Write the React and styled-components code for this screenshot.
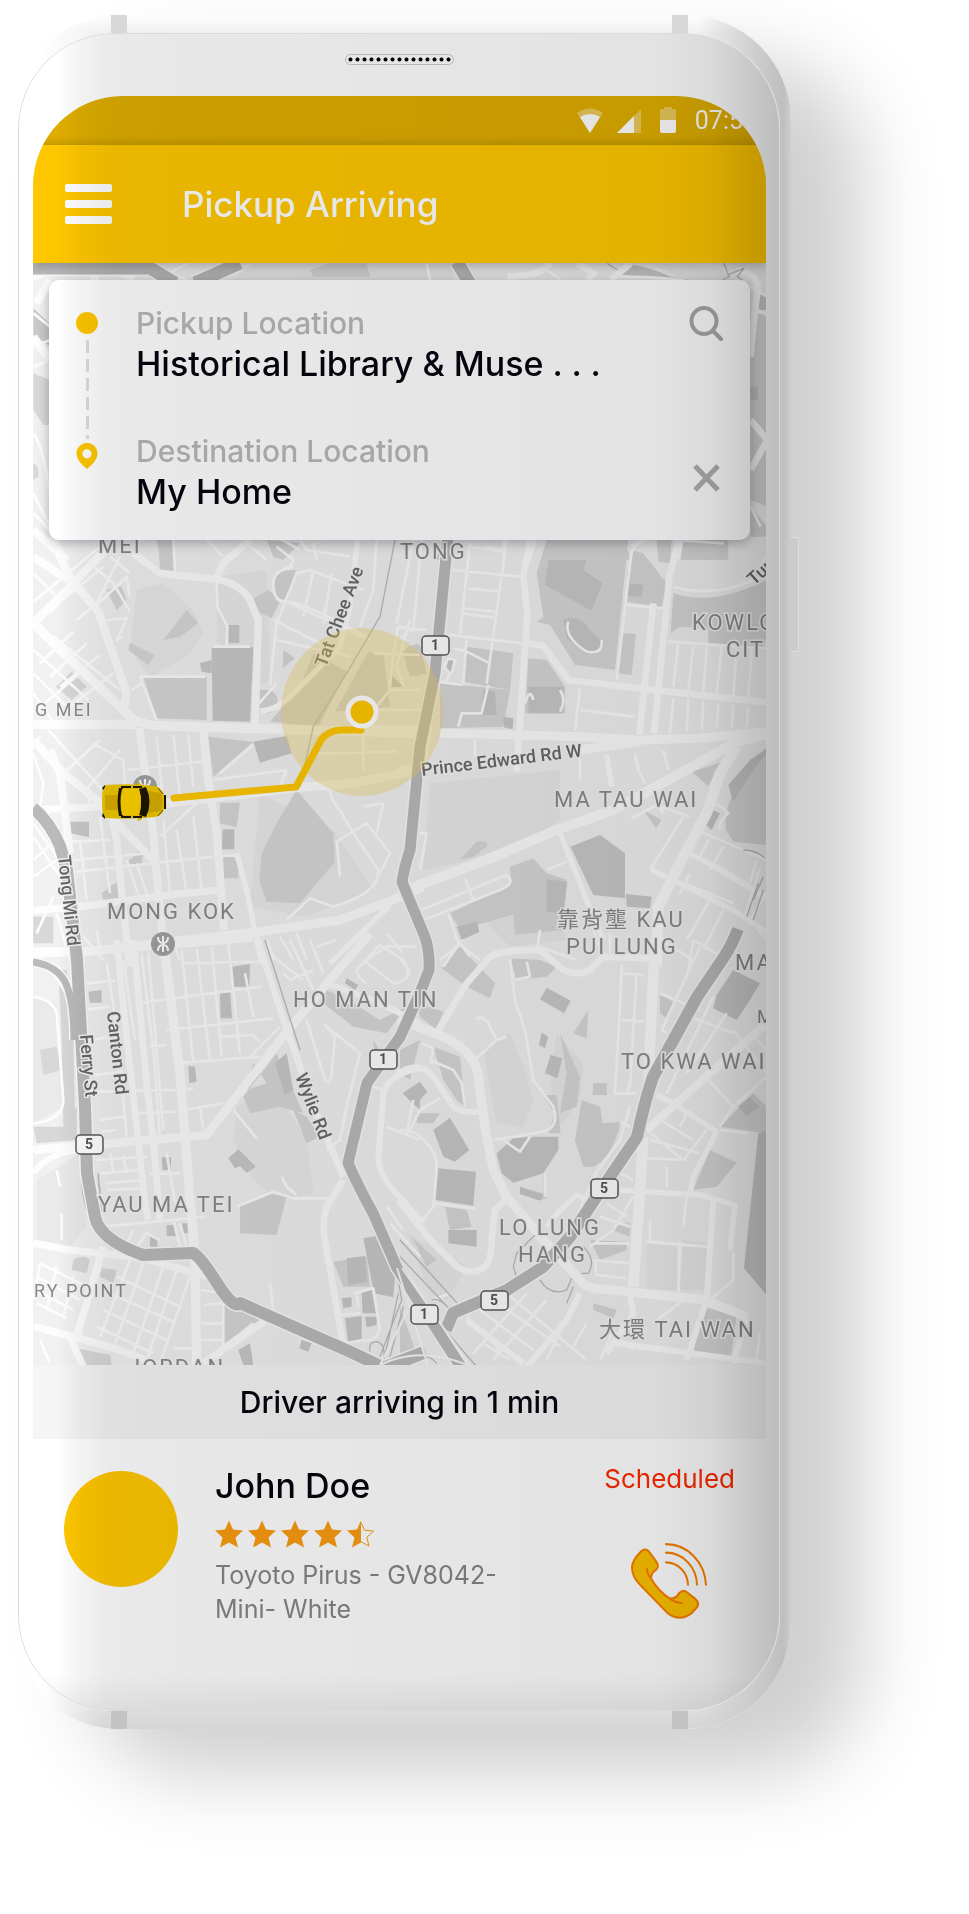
import React from "react";
import styled, { createGlobalStyle } from "styled-components";

const GlobalStyle = createGlobalStyle`
  *, *::before, *::after { box-sizing: border-box; }
  body {
    margin: 0;
    background: #fff;
    color: #05050f;
    font-family: Inter, "Liberation Sans", "Noto Sans CJK TC", sans-serif;
  }
  p, h1, h2 { margin: 0; font-weight: 500; }
  button { padding: 0; border: 0; background: none; cursor: pointer; }
  svg { display: block; }
`;

/* ---------- device ---------- */

const Page = styled.main`
  min-height: 100vh;
  padding: 15px 178px 184px 18px;
  overflow: hidden;
`;

const Phone = styled.div`
  position: relative;
  padding: 18px 11px 18px 0;
  border-radius: 100px 106px 106px 100px;
  background:
    linear-gradient(90deg, #fff 3%, transparent 11%),
    linear-gradient(90deg, transparent 88%, #c2c2c2 98%, #bfbfbf 99%, #cecece 100%),
    linear-gradient(180deg, #fefefe 0, #f0f0f0 18px, #e2e2e2 98%, #d6d6d6 100%);
  box-shadow: 72px 46px 80px rgba(0, 0, 0, 0.19);
`;

const Antenna = styled.span`
  position: absolute;
  ${(p) => p.$edge}: 0;
  ${(p) => p.$side}: ${(p) => (p.$side === "left" ? 93 : 103)}px;
  width: 16px;
  height: 18px;
  background: ${(p) => (p.$edge === "top" ? "#d8d8d8" : "#c3c3c3")};
`;

const PowerKey = styled.span`
  position: absolute;
  top: 522px;
  left: 100%;
  width: 8px;
  height: 115px;
  border-radius: 0 3px 3px 0;
  border: 1px solid #dedede;
  border-left: 0;
  background: #cbcbcb;
`;

const Front = styled.div`
  position: relative;
  border-radius: 96px;
  overflow: hidden;
  padding: 0 14px 0 15px;
  background: #fff;
`;

const Shade = styled.div`
  position: absolute;
  z-index: 2;
  inset: 0;
  border-radius: 96px;
  border: 1px solid #dadada;
  pointer-events: none;
  mix-blend-mode: multiply;
  background:
    linear-gradient(0deg, rgba(0, 0, 0, 0.06) 0, transparent 36px),
    linear-gradient(
      90deg,
      #fff 0, #fff 5%, #f3f3f3 8%, #eaeaea 12%, #e8e8e8 20%,
      #e5e5e5 60%, #e3e3e3 84%, #dadada 91%, #c9c9c9 96%, #bdbdbd 100%
    );
`;

const Earpiece = styled.div`
  display: grid;
  place-items: center;
  height: 63px;
  padding-bottom: 10px;
`;

const Grille = styled.div`
  width: 109px;
  height: 11px;
  border: 1px solid #ccc;
  border-radius: 6px;
  background: radial-gradient(circle, #000 0 1px, #000 1.6px, transparent 2.4px) 1px center / 7px 9px repeat-x content-box;
`;

const Screen = styled.div`
  overflow: hidden;
  border-radius: 90px 90px 0 0;
`;

const StatusBar = styled.div`
  display: flex;
  justify-content: flex-end;
  align-items: center;
  gap: 14px;
  height: 49px;
  padding-right: 23px;
  background: #dfae00;
  color: #fff;
  font: 400 25px/49px Roboto, sans-serif;
`;

const AppBar = styled.header`
  position: relative;
  z-index: 1;
  display: flex;
  align-items: center;
  gap: 70px;
  height: 118px;
  padding-left: 32px;
  background: #ffc700;
  box-shadow: 0 2px 12px rgba(0, 0, 30, 0.3);
`;

const MenuButton = styled.button`
  display: grid;
  gap: 8px;
  width: 47px;
`;

const MenuBar = styled.span`
  height: 8px;
  border-radius: 2px;
  background: #fff;
`;

const Title = styled.h1`
  color: #fff;
  font-size: 35px;
  line-height: 44px;
`;

/* ---------- map and trip card ---------- */

const MapArea = styled.section`
  display: grid;
  overflow: hidden;
  > * { grid-area: 1 / 1; }
`;

const MapDrawing = styled.svg`
  width: 100%;
  height: auto;
  background: #f1f1f1;
`;

const TripCard = styled.div`
  position: relative;
  align-self: start;
  display: flex;
  margin: 17px 16px 0;
  padding: 25px 27px;
  border-radius: 10px;
  background: #fff;
  box-shadow: 0 3px 12px rgba(0, 0, 30, 0.3);
`;

const Rail = styled.div`
  display: flex;
  flex-direction: column;
  align-items: center;
  width: 22px;
  padding: 7px 0 46px;
`;

const Dot = styled.span`
  width: 22px;
  height: 22px;
  border-radius: 50%;
  background: #ffc700;
`;

const Dashes = styled.span`
  flex: 1;
  width: 3px;
  margin: 6px 0 4px;
  background: repeating-linear-gradient(#ddd 0 13px, transparent 13px 19px);
`;

const Stops = styled.div`
  flex: 1;
  min-width: 0;
  display: grid;
  gap: 46px;
  padding-left: 38px;
`;

const StopLabel = styled.p`
  color: #b8b8b8;
  font-size: 30px;
  line-height: 36px;
`;

const StopValue = styled.p`
  font-size: 34px;
  line-height: 46px;
  white-space: nowrap;
`;

const CardActions = styled.div`
  display: flex;
  flex-direction: column;
  justify-content: space-between;
  padding-bottom: 20px;
`;

/* ---------- driver ---------- */

const Banner = styled.p`
  height: 74px;
  background: #f5f5f5;
  font-size: 30px;
  line-height: 74px;
  text-align: center;
`;

const Driver = styled.section`
  display: flex;
  padding: 27px 31px 85px 31px;
`;

const Avatar = styled.div`
  width: 114px;
  height: 116px;
  margin: 5px 37px 0 0;
  border-radius: 50%;
  background: #ffc700;
`;

const DriverInfo = styled.div`
  flex: 1;
  min-width: 0;
`;

const DriverName = styled.h2`
  font-size: 34px;
  line-height: 40px;
`;

const Stars = styled.div`
  display: flex;
  gap: 5px;
  margin: 14px 0 10px;
`;

const CarInfo = styled.p`
  max-width: 300px;
  color: #858585;
  font-size: 25px;
  font-weight: 400;
  line-height: 34px;
`;

const DriverSide = styled.div`
  display: flex;
  flex-direction: column;
  align-items: flex-end;
`;

const Scheduled = styled.p`
  color: #ff2a00;
  font-size: 26px;
  font-weight: 400;
  line-height: 26px;
`;

const CallLink = styled.a`
  margin: 50px 27px 0 0;
`;

/* ---------- map data: tiles drawn at three units per pixel ---------- */

const tiles = [
  {
    at: "translate(20 540) scale(.3333)",
    light: [
      "M350 150 430 130 520 210 550 280 500 350 390 410 330 330Z",
      "M590 110 740 90 750 420 710 440 590 300Z",
      "M720 760 940 870 1060 1050 860 1130 690 1100Z",
    ],
    blocks: [
      "M370 410H560V540L410 535Z", "M260 150 305 140 320 180 290 210Z",
      "M155 395 200 440 155 480 108 440Z", "M330 308 405 345 385 375 325 330Z",
      "M415 0H460L465 95 420 88Z", "M880 340 982 395 895 560 750 545 840 440Z",
      "M1045 335 1090 340 1110 500 945 515Z", "M700 175 745 150 782 180 755 235 705 210Z",
      "M720 450Q780 445 772 495L750 520H718Z", "M565 590 700 605 580 710Z",
      "M600 788H660L650 862 600 850Z", "M830 750 940 880 945 965 840 1090 740 1085 718 1020 725 940 770 850Z",
      "M500 210 535 250 480 290 430 300Z", "M765 105Q790 88 828 90L802 186Q765 175 762 145Z",
      "M790 330 825 355 788 385Z", "M245 1060 285 1030 298 1022 300 1080 255 1100Z",
      "M40 1130H100V1210H40Z", "M610 950H655V1015H612Z", "M1190 310Q1155 330 1158 370T1200 405Z",
      "M320 970 370 920 365 975Z",
    ],
    dark: [
      "M575 325 700 322 690 545 578 542Z", "M540 370 575 360V400L545 395Z", "M625 255H658V308H625Z",
      "M700 605 800 588 815 640 720 668Z", "M608 868H643V928H606Z", "M150 845H207V892L152 880Z",
      "M1115 405 1150 440 1113 442Z",
    ],
    minor: [
      "M40 100 110 170M40 185 240 20M70 225 250 80M210 70 280 130 330 215M300 50 230 190 170 240",
      "M330 170 320 110 230 195M260 240 320 235 290 300 310 290M170 120 90 220M330 100 270 50",
      "M60 370 160 275M90 410 200 310M120 440 240 345M40 400 140 500M40 330 205 480M150 500 280 400",
      "M40 460 100 545M100 290 300 450M40 520 180 400M590 110 592 200 622 260 620 320M580 320H690",
      "M360 410 410 540M360 410H555M335 450 365 430M700 510 770 430",
      "M85 570 320 830M130 700 240 600M190 760 300 630M220 610 310 660 320 820M60 590 20 650",
      "M320 690 545 665M410 590 430 790M460 585 480 770M505 585 520 740M420 890 530 790",
      "M155 905 270 900M180 900 200 1080M170 995 580 950M240 830 270 1060M430 840 450 1060M470 870 500 1060M520 830 545 1050",
      "M200 740 210 800M320 960 360 1080M350 970 380 1060M160 960 380 940",
      "M750 435 770 250 830 100 870 90 1030 150M880 95 850 230M935 100 910 250M760 240 960 340M770 300 990 350",
      "M790 180 1050 300M1070 0 1060 150 1020 260M820 80Q755 90 760 140T800 185 1040 290",
      "M580 720 800 690M600 700 700 615M800 690 780 740M640 770 830 745",
      "M560 0 610 50M460 0 465 95M770 20 820 60 805 90M840 0 860 30 990 50",
      "M930 740Q930 780 960 810L1000 880 1075 990Q1080 1060 940 1100L870 1075 800 1140",
      "M950 905 1040 850 1110 940 1080 1000M1070 880 1090 790 1030 800M950 900 960 1010",
      "M1060 340 1200 345M1110 440 1120 340 1135 260 1200 270M1070 500 1110 450 1200 450M1040 510H1200M890 640 1130 635M1030 590V690M1010 560H1200",
      "M1180 0 1130 250M1170 240 1130 380 1150 440M600 950Q650 940 655 960",
      "M50 1180 100 1070M740 1200 760 1260M780 1190 820 1260M830 1180 860 1260M190 1190 250 1260M450 1180 480 1260M230 1170 240 1230M1100 1180 1150 1240M1040 1260 1100 1220H1190",
      "M40 850 140 990M40 890 120 1010M40 1010 110 960M40 960 120 890",
      "M40 640 70 730 60 800M110 1120 150 1260",
    ],
    roads: [
      ["M40 553H350M40 250 340 540Q380 558 440 558L870 570 1210 580", 28],
      ["M95 -10 150 115 235 215 320 460 312 505M40 250 165 125 275 10M40 50 160 130", 25],
      ["M340 40 420 100 590 118Q660 130 690 180L715 240 705 560M590 115 610 70 690 0", 22],
      ["M40 600 120 690 230 780 310 870 400 960M90 630 120 700 150 940", 24],
      ["M358 565 375 690 400 880 420 1120 440 1280M550 570 562 700 590 880 612 1170", 24],
      ["M275 830 290 900 310 1110 330 1280M40 810 245 800M40 1112 200 1098 420 1068 600 1050", 22],
      ["M40 1235H200L720 1175 960 1140 1120 1080 1210 1040M440 790 845 742 1000 730 1200 688", 27],
      ["M720 513Q780 510 840 440L960 320 990 200 1015 -10M650 940 680 1050 710 1200 725 1270M1110 1095 930 1270", 16],
    ],
    rail: "M1125 0 1080 230 980 400 880 560 840 740",
  },
  {
    at: "translate(400 540) scale(.3333)",
    light: ["M90 730 480 690 480 840 390 900 210 960 70 990Z", "M210 1100 420 1000 500 1200 330 1220Z"],
    blocks: [
      "M440 0 685 0 645 390 525 375 450 255 410 245 430 230 410 100Z",
      "M690 30 730 40 800 130 785 200 680 185Z", "M820 160Q940 200 1100 120V290L1090 325 925 315 925 265 840 260 812 280Z",
      "M845 0H985V60L850 50Z", "M200 320 340 340 330 450 190 425Z", "M120 430 330 450 310 560 120 565Z",
      "M385 355 440 360 495 440V520H375Z", "M668 280 708 282 695 405 655 400Z", "M330 980 400 955 440 1000 500 1020 490 1170 345 1185Z",
      "M150 1120 340 1030 350 1120 180 1170Z", "M875 695 960 668 925 738Z", "M730 810 785 840 768 865Z",
      "M978 870Q970 810 1010 740L1100 620V915L1000 905Z", "M178 960 230 905Q270 900 260 920L220 950Z",
      "M10 340Q20 310 60 315L80 400 30 410Z", "M770 0 815 0 810 70 775 65Z",
      "M680 95 715 95 715 130 685 130Z",
    ],
    dark: [
      "M455 0H540L570 25 550 90 607 130 575 212 435 135Z", "M685 130 730 135 725 170 683 168Z",
      "M385 440H490V520H385Z", "M250 450 285 455 290 525 245 525Z", "M512 920 600 885 675 940V1075L580 1065Z",
      "M440 1018 502 1025 490 1120 440 1115Z", "M170 1160 230 1145 238 1175 185 1200Z",
      "M678 1062 755 1070 750 1105 680 1100Z", "M145 360H160V395H138Z", "M490 240Q540 220 570 270L612 310Q605 345 560 342L500 295Z",
      "M985 735 1050 660 1100 625V640L1060 690 1000 785Z", "M940 810 960 820 935 870 918 855Z", "M310 530 340 535 338 568 312 562Z",
    ],
    minor: [
      "M65 0 40 270M210 10 180 280M320 0 260 430M160 90 360 110M210 20 310 35M205 145 300 155M190 205 285 215M185 220 280 232",
      "M0 300Q20 260 80 270M110 280 370 310M200 290 190 430M160 325 200 335 270 370M110 425 190 435M265 435 245 520 185 520 175 560",
      "M135 430 150 400 130 380 145 355 165 360 155 400M695 30 650 420M695 20Q710 0 740 0M680 195 790 205M540 445 525 570M540 510 705 530",
      "M540 655V720M225 600V650M705 640 715 690 735 730M790 630 805 690M695 835 770 795 870 830M770 790 790 820M110 430 70 720",
      "M835 310 820 440M880 320 865 450M920 320 910 455M965 320 950 460M1010 325 1000 470M1055 330 1045 475M805 305 1100 325",
      "M820 475 810 580M865 475 860 575M910 485 905 570M955 490 950 565M1000 495 995 565M1045 500 1040 560",
      "M820 140Q960 180 1100 100M70 1140 300 1050Q350 1030 320 1005L40 1120M195 1015 220 1080M145 1120 175 1210 240 1260M175 1215 120 1260",
      "M440 990 500 965M850 830 750 990M870 940 1100 1080M890 870 1100 960M925 900 900 950M970 920 930 990M1070 960 1050 1030M870 1000 840 1060",
      "M830 1020 1000 1090M1080 985 1030 1140M930 1080 860 1200M970 1110 910 1230M880 1200 980 1260M1100 1060 1050 1140 1100 1200",
      "M960 870Q950 850 985 820 960 790 930 790M1045 940Q1080 940 1100 960M250 1260Q290 1220 430 1225L530 1260M575 1150 600 1230M630 1180V1240M420 1170 410 1240",
      "M60 880H80L60 990M1100 50Q1090 60 1080 80M375 490Q390 440 400 480M480 450Q500 480 480 515M505 245Q490 290 560 335 610 345 605 300",
    ],
    roads: [
      ["M390 0 370 110 382 220 350 695M385 310 430 318 505 420 720 445 1105 488", 20],
      ["M840 -10 808 110 800 200 762 580M760 190 718 585", 20],
      ["M120 580 350 585 540 590 720 600 900 595 1105 575M540 630 720 605", 27],
      ["M20 1050 270 955 470 870 640 810 860 690 1000 610 1105 580", 30],
      ["M1010 620 960 700 920 820 840 970 775 1100 770 1280", 32],
      ["M620 645 635 740M480 880 560 1080 610 1200M755 990 1000 1110 1105 1180M860 935 1000 1010 1105 1075", 16],
      ["M-5 690 70 680", 22],
    ],
    rail: "M1030 930Q1070 930 1095 955M1075 1030 1040 1130M1090 1050 1060 1140M1060 1080 1090 1010",
  },
  {
    at: "translate(20 940) scale(.3333)",
    light: ["M650 500 760 440 860 600 880 760 770 780 700 720 640 600Z", "M40 170 110 190 130 500 40 550Z", "M50 720 180 640 200 860 150 920 50 900Z"],
    blocks: [
      "M770 340 850 520 780 500 690 520 670 470Z", "M920 150 1000 190 1080 240 1160 200 1100 280 1000 260 910 190Z",
      "M40 560H130L170 500V600L50 610Z", "M115 90H140L160 280 165 560H130L125 300Z", "M60 330 110 320 125 390 70 405Z",
      "M660 800 740 760 800 770 770 885 660 880Z", "M940 965 1040 950 1050 1040 970 1040Z", "M612 1080 720 1140 612 1210Z",
      "M160 960Q190 940 210 960L200 1000 155 990Z", "M245 985 290 990 280 1030 240 1010Z", "M170 1225 270 1245 275 1275H190Z",
      "M820 510 860 530 900 590 860 610Z", "M700 370 680 450 740 430Z", "M1060 300 1090 350 1070 420Z",
    ],
    dark: [
      "M637 80 690 72 688 140 642 140Z", "M600 160 630 157 636 235 602 235Z", "M205 155 245 150V188H210Z",
      "M425 652H453V690H428Z", "M655 628 708 680 680 698 660 678 645 685 625 655Z", "M505 378 525 380 530 425 508 430Z",
      "M980 955 1035 948 1042 1025 985 1035Z", "M1030 895 1070 888 1125 1010 1120 1072 1062 1060Z",
      "M965 1075 995 1072V1100L970 1105Z", "M1025 1060 1055 1048 1068 1120H1028Z", "M975 1135 1025 1128V1200L985 1210Z",
      "M1035 1130 1070 1130V1155L1040 1162Z", "M655 1230 690 1210 700 1275H670Z", "M845 1200 875 1210 865 1235 838 1225Z",
      "M440 855H468V888H440Z", "M487 850H503V880H487Z", "M390 890H412V920H390Z", "M1150 460 1200 425V510Z",
      "M765 370 800 340 820 450 795 465Z", "M980 115 1015 135 1005 150 975 130Z", "M230 700 245 760 235 740Z",
    ],
    minor: [
      "M40 170Q100 180 110 220L130 480Q130 540 40 550M200 130 285 122M205 208 270 200M260 70 290 260 320 590",
      "M310 60 345 300M365 45 400 330 420 590M385 40 430 570M485 30 520 370M530 25 570 360M575 20 605 350M625 10 660 340M675 100 700 230M345 190 725 140M490 70 715 65",
      "M440 270 760 235M470 370 720 350M220 300 270 290M220 405 310 395M230 455 470 450M340 520 470 515M240 540 310 530M245 575 290 570",
      "M230 660 380 650M240 700 360 690M255 730 370 720M260 750 360 745M390 700 480 700M270 640 280 700M310 645 320 700M440 640 465 790",
      "M490 510 610 490M540 500 550 570M500 450 520 445M600 290 700 285 720 305M690 350 780 260M640 510 710 595M390 320 440 315",
      "M250 860 560 830M340 870 310 930M350 920 380 880 420 900M460 840 480 920M480 850 500 920",
      "M60 970 200 1040M50 1010 180 1080M45 1050 160 1110M50 1090 140 1135M60 970 40 1080M110 980 80 1110M160 1010 130 1130",
      "M330 960 240 1190M370 970 285 1210M430 980 340 1240M470 990 380 1260M510 1010 420 1270M290 1010 480 1100M270 1060 470 1150M250 1110 440 1200M230 1160 400 1240",
      "M545 1050 605 1060M550 1095 605 1090M545 1150 610 1150M540 1200H610M610 1080V1220M550 1270 700 1150M460 1225H540",
      "M790 100 810 120 880 90M740 0 760 50 850 120M810 0 880 150M870 0 910 100M860 240 915 420Q930 440 935 400L945 290 915 255 1020 340 980 500 960 600 920 630",
      "M1030 60 1120 130Q1150 130 1170 100L1150 60 1080 15 1010 90Q1010 110 1040 130M785 710 800 740 830 765",
      "M650 800 760 755 820 775 920 775M750 1030 760 1110M1000 1060 1060 1045 1080 1170Q1060 1210 1030 1200L975 1210M1010 1060 1015 1100M960 1125 1020 1120",
      "M1100 560 1200 600M1180 480 1160 580M890 20 950 0M1060 440 1090 450M110 690 120 740M125 820V900M60 1200 90 1270M50 60Q110 90 150 190",
      "M1100 800 1150 870M1110 850 1200 950",
    ],
    roads: [
      ["M40 45 290 30 700 -5M290 0 310 200 350 560 375 790 385 840M340 0 380 430 400 600 420 840", 20],
      ["M435 40 480 400 510 780 525 940 530 1280", 28],
      ["M1050 -20 930 120 800 275 560 585 250 612 40 630", 26],
      ["M710 -10 800 270 830 350 880 500 970 710M970 720 920 800Q905 850 915 900L970 1220", 20],
      ["M920 130 1060 180 1200 250M40 700Q80 640 180 630", 18],
      ["M40 910 150 930 340 950 420 970 600 1020M250 920 170 1190M40 1160 160 1190 300 1230 400 1270M150 1190 190 1280M550 1270 740 1140", 22],
      ["M1200 385Q1110 400 1090 460L1075 660Q1080 700 1110 740L1210 850", 18],
    ],
    rail: "M735 0 840 330M1135 1060 1090 1270M1150 1100 1105 1270M1090 1270Q1100 1210 1070 1205 1045 1205 1050 1235M185 720Q190 850 275 925M235 700 245 830M1130 990 1145 1080 1080 1250",
  },
  {
    at: "translate(400 940) scale(.3333)",
    light: [
      "M250 330 330 280 370 380 400 480 370 560 290 550Z", "M470 280 550 370 540 480 480 560 450 440Z",
      "M740 910 830 920 830 1050 740 1050Z", "M850 900 920 910 920 1050 840 1050Z", "M20 880 200 980 140 1080 90 1060Z",
    ],
    blocks: [
      "M125 85 180 20 285 130 270 175 200 140Z", "M330 55 420 60 470 80 440 110 350 120Z", "M780 165 820 185 800 235 780 220Z",
      "M100 320 180 350 195 500 170 480 130 420Z", "M428 465H470L482 580H445L465 520Z", "M545 480 600 500 608 550 662 545Q640 650 580 680L550 680 525 600Z",
      "M580 430H620V465H578Z", "M480 280 540 410 530 500 480 520 500 400Z", "M960 560 1060 460 1100 500V580Z",
      "M930 630 1010 668 950 740 880 750Z", "M35 890 110 960 80 980Z", "M360 740 430 760 430 700 440 775 420 780 360 760Z",
      "M135 800 200 810 215 860 150 870Z", "M570 900 680 905V930L600 960Z", "M635 870 650 850H690V890Z",
      "M910 1100 1010 1130 990 1265 880 1240Z", "M50 190 130 215 110 270 60 230Z", "M520 280 565 210 560 295Z",
      "M0 1100 60 1270H0Z", "M580 1090 650 1110 640 1135 580 1110Z", "M30 420 60 300 0 330V400Z",
      "M50 520 120 520 100 550 50 550Z",
    ],
    dark: [
      "M440 143 512 182 492 220 420 178Z", "M425 278 445 290 435 325 417 315Z", "M452 345 487 355 472 415 435 400Z",
      "M100 570 150 533 208 630 165 665 130 650Z", "M115 685 228 695 220 797 107 780Z", "M8 460 60 425 82 455 45 497Z",
      "M290 640 340 595 400 590 475 590 475 630 430 700 340 728 305 700Z", "M145 870 230 870V920L145 910Z",
      "M1000 90 1080 130 1050 180 1010 240 940 205 950 165Z", "M1075 580 1100 570V1065L1032 985Z",
      "M1015 500 1050 470 1078 500 1040 530Z", "M360 740 430 765 420 782 360 762Z",
    ],
    minor: [
      "M330 55 345 180 375 270 400 420Q430 460 460 500 480 560 430 575L280 600M345 120 390 110 380 65",
      "M230 355 290 300 265 250Q240 220 230 240M290 300 320 290M65 310 100 325 90 370M90 360 160 390 185 430 195 500M30 570 60 510 120 475",
      "M0 570Q50 570 80 610 110 640 110 680L100 800 60 850M105 790 225 805M310 600 360 635 390 590M435 700V770",
      "M665 75 660 200 645 460H710M710 100 690 440M665 100 730 105M665 240 730 245M780 0 880 60M900 20 785 270 800 280M880 0 860 120",
      "M780 160 900 210M870 230 1000 280M940 170 800 460M980 220 860 400M1000 270 1100 400M925 420 1000 500 960 560M1000 500 1100 410",
      "M1050 280 1100 330M740 570 850 660 920 570M750 600 900 640M780 540 880 600M840 560 860 520M740 655 860 660M800 680V740M860 770 850 860",
      "M660 700 700 720M690 500 660 600 580 710M660 545 690 560M530 760 480 820M620 790 680 830M600 830 690 860M640 870 700 770",
      "M580 910 690 910M580 960 690 970M590 1005 680 1015M585 960 590 1010M740 905 920 920M750 840V900M840 910 835 1060M1000 940 1000 1020 930 1080",
      "M200 1130 300 1230M240 1110 400 1230M280 1080 480 1220M320 1060 560 1260M380 1060 220 1240M440 1080 280 1260M500 1130 440 1260M560 1150 520 1220M250 1210 330 1260M640 1170 600 1260M700 1230 640 1180",
      "M150 1060 100 1080M960 570 1045 580M680 460 690 430M570 920 640 870M850 1080 760 1150M0 60Q30 80 20 110M1080 1180 1070 1260",
      "M175 0 210 50M130 80 170 20 190 0M590 700 560 760 500 900",
    ],
    roads: [
      ["M115 270 200 130 270 50Q300 30 420 30L490 90Q530 110 570 90L610 50 750 55", 20],
      ["M765 0 745 420M730 590 720 750 700 1040", 32],
      ["M-5 235 130 290Q240 340 238 440L255 560 280 690 320 770 430 900 540 1020Q560 1050 620 1048L910 1080 1040 1130", 28],
      ["M1100 250 930 400 740 570", 24],
      ["M-5 400Q60 360 100 410L160 500Q180 520 240 515", 18],
      ["M-5 780 100 910 170 980Q220 1010 255 980 275 960 275 900L285 810 320 775", 20],
      ["M820 490 950 575 880 710 870 760M740 755 900 765 1005 795 990 930M770 465 820 490M660 750 740 755", 16],
      ["M940 780 920 1080 860 1260M620 1240 700 1120 690 1070M650 1210 1100 1270M380 1280 500 1140 540 1060M1040 1130 1000 1270M200 1140 370 1270", 18],
      ["M530 765 480 810 440 860M530 765 560 780", 16],
    ],
    rail: "M405 885 350 940 340 980 355 1030M420 1020Q450 1070 500 1050L515 1015M520 1040 500 1090M550 920Q590 960 565 1000H545M95 1080Q120 1070 160 1120M0 980 100 1130 230 1280M0 950 170 1130M20 1060 120 1170 200 1280M0 900 190 1110M0 1260Q80 1230 110 1270",
  },
  {
    at: "translate(0 260) scale(.3333)",
    light: ["M760 10H1360V60H700Z"],
    blocks: ["M100 340 150 360V495H130L100 450Z", "M100 610Q120 620 115 650L100 660Z", "M470 840 520 850 510 900 480 890Z", "M800 840 900 850 850 900 820 890Z", "M930 30 990 10H1100L1110 50H940Z"],
    dark: ["M100 145 148 190V258L100 225Z", "M1325 840H1365L1350 900H1310Z"],
    minor: ["M100 160 150 200M100 320 150 300M100 700 200 900M440 10 560 60M490 50 560 10M740 850 800 900M830 830 900 870M1280 10 1290 60M950 900 940 850M1070 840 1060 900M100 520Q130 560 150 700M100 760 160 820M100 260 150 240"],
    roads: [["M100 50Q180 15 270 20T400 60M285 10V60M100 230 150 300M100 810 200 900M110 130 150 60", 24]],
    rail: "M100 20 260 10",
  },
  {
    at: "translate(484 260) scale(.3333)",
    light: ["M500 10 700 20 750 60H600Z"],
    blocks: ["M820 160 850 165V740L800 720 800 260Z", "M800 740 850 800V830H800Z", "M190 840 420 840 440 900H170Z", "M600 840 730 850 720 900H590Z"],
    dark: ["M420 15Q470 10 560 50L620 60 410 45Z", "M820 100 850 110V150L825 150Z", "M800 380H822V420H800Z"],
    minor: ["M190 30 230 60M410 50Q500 50 600 60M800 80 850 110M820 150 850 165M800 740 830 800M440 900Q440 850 490 840M60 840 60 900M0 860 60 870M570 840 720 850"],
    roads: [["M70 50 130 45Q170 40 200 10M280 10 330 40 310 60M440 10 380 60M760 30Q830 40 820 100T800 290M800 480 850 540 800 630M150 840 130 900M590 840 575 900", 20]],
    rail: "M720 10 735 50 715 60M730 45 780 25 760 50 775 60M370 10 400 30",
  },
];

const highways = [
  ["M448 536 435 673 420 747 410 850Q404 868 402 882L425 937Q430 952 429 970L420 993 400 1037 367 1083 348 1163Q360 1190 373 1213L397 1268 463 1370", 11],
  ["M33 808Q50 822 60 846L67 870 77 960 85 1107 87 1173 95 1217Q100 1240 143 1255L193 1253Q200 1256 217 1283T240 1303L353 1353 384 1368", 12],
  ["M33 962Q58 966 66 984T74 1040", 7],
  ["M738 929Q732 945 724 957L697 997 653 1077Q645 1100 637 1137L603 1187 570 1237 543 1267 507 1290 453 1313 446 1330", 12],
  ["M457 262 470 284M195 283 240 263M33 268H150L175 283M384 1368 425 1352", 13],
];

const places = [
  [98, 553, "MEI"], [400, 559, "TONG"], [692, 630, "KOWLO"], [726, 657, "CIT"],
  [35, 716, "G MEI", 18], [554, 807, "MA TAU WAI"], [107, 919, "MONG KOK"],
  [557, 927, "靠背壟 KAU"], [566, 954, "PUI LUNG"], [735, 970, "MA"], [757, 1023, "M", 18],
  [293, 1007, "HO MAN TIN"], [621, 1069, "TO KWA WAI"], [98, 1212, "YAU MA TEI"],
  [34, 1297, "RY POINT", 18], [499, 1235, "LO LUNG"], [518, 1262, "HANG"],
  [599, 1337, "大環 TAI WAN"], [128, 1375, "JORDAN"],
];

const streets = [
  [326, 668, -69, "Tat Chee Ave"], [422, 776, -7, "Prince Edward Rd W"], [58, 856, 84, "Tong Mi Rd"],
  [80, 1035, 85, "Ferry St"], [107, 1012, 84, "Canton Rd"], [295, 1076, 69, "Wylie Rd"], [754, 586, -42, "Tur"],
];

const shields = [[435, 645, 1], [383, 1059, 1], [89, 1144, 5], [604, 1188, 5], [494, 1300, 5], [424, 1314, 1]];

const PlaceName = styled.text`
  font: 400 ${(p) => p.$size}px Roboto, "Noto Sans CJK TC", sans-serif;
  letter-spacing: 2px;
  fill: #8a8a8a;
  stroke: #f4f4f4;
  stroke-width: 3px;
  paint-order: stroke;
`;

const StreetName = styled.text`
  font: 500 18px Roboto, sans-serif;
  fill: #686868;
  stroke: #f4f4f4;
  stroke-width: 3px;
  paint-order: stroke;
`;

const ShieldText = styled.text`
  font: 700 14px Roboto, sans-serif;
  fill: #555;
  text-anchor: middle;
`;

function Station({ x, y }) {
  return (
    <g transform={`translate(${x} ${y})`} fill="none" stroke="#fff" strokeWidth="2">
      <circle r="12" fill="#a3a3a3" stroke="none" />
      <path d="M0-8V8M-5-7Q-5-1 0-1T5-7M-5 7Q-5 1 0 1T5 7" />
    </g>
  );
}

function Car() {
  return (
    <g transform="translate(101 783)">
      <path d="M38 4 36-1 40 1 42 4ZM38 34 36 38 40 37 42 34Z" fill="#eac400" />
      <path d="M4 2Q30 0 54 3 64 6 64 19T54 34Q30 37 4 35 1 34 1 19T4 2Z" fill="#f0c800" />
      <path d="M4 12H16V27H4ZM46 8 60 10Q63 19 60 28L46 30Z" fill="#d9af00" />
      <path d="M18 5Q15 19 18 33H22Q19 19 22 5ZM38 6Q42 19 38 32L45 34Q52 19 45 4Z" fill="#1b1600" />
      <path d="M21 6H38Q42 19 38 32H21Q18 19 21 6Z" fill="#ffd200" />
      <path d="M20 3H30V5H20ZM32 3H41V5H32ZM20 33H30V35H20ZM32 33H41V35H32ZM63 12H65V26H63ZM1 5 4 2V4L2 7ZM1 33 4 36V34L2 30Z" fill="#1b1600" />
      <path d="M57 5 62 11M57 33 62 27" stroke="#6b5700" strokeWidth="1" />
    </g>
  );
}

function CityMap() {
  return (
    <MapDrawing viewBox="33 263 733 1102" role="img" aria-label="Route map">
      {tiles.map((t) => (
        <g key={t.at} transform={t.at}>
          <path d={t.light.join("")} fill="#eaeaea" />
          <path d={t.blocks.join("")} fill="#d8d8d8" />
          <path d={t.dark.join("")} fill="#c9c9c9" />
        </g>
      ))}
      {tiles.map((t) => (
        <g key={t.at} transform={t.at} fill="none" stroke="#fdfdfd" strokeLinejoin="round">
          <path d={t.minor.join("")} strokeWidth="8" />
          {t.roads.map(([d, w]) => <path key={d} d={d} strokeWidth={w} />)}
          <path d={t.rail} stroke="#bdbdbd" strokeWidth="4" />
        </g>
      ))}
      <g fill="none" strokeLinejoin="round">
        {highways.map(([d, w]) => <path key={d} d={d} stroke="#fafafa" strokeWidth={w + 3} />)}
        {highways.map(([d, w]) => <path key={d} d={d} stroke="#bababa" strokeWidth={w} />)}
        <path d="M397 1268 428 1366M402 1268 470 1366M408 1310 380 1365M380 1365Q420 1345 470 1366" stroke="#fafafa" strokeWidth="2" />
      </g>
      {places.map(([x, y, name, size = 22]) => (
        <PlaceName key={name + y} x={x} y={y} $size={size}>{name}</PlaceName>
      ))}
      {streets.map(([x, y, turn, name]) => (
        <StreetName key={name} transform={`translate(${x} ${y}) rotate(${turn})`}>{name}</StreetName>
      ))}
      {shields.map(([x, y, n]) => (
        <g key={x} transform={`translate(${x} ${y})`}>
          <rect x="-13" y="-9" width="27" height="19" rx="4" fill="#fff" stroke="#5a5a5a" strokeWidth="1.5" />
          <ShieldText x="0" y="5">{n}</ShieldText>
        </g>
      ))}
      <Station x={145} y={787} />
      <Station x={163} y={944} />
      <ellipse cx="362" cy="712" rx="81" ry="84" fill="#eed56a" fillOpacity=".38" />
      <path d="M174 798 296 787 321 740Q328 730 342 730H361" fill="none" stroke="#ffc700" strokeWidth="7" strokeLinecap="round" />
      <circle cx="362" cy="712" r="14" fill="#ffc700" stroke="#fff" strokeWidth="5" />
      <Car />
    </MapDrawing>
  );
}

/* ---------- icons ---------- */

const WifiIcon = () => (
  <svg width="26" height="25" viewBox="0 0 26 25" fill="#fff">
    <path d="M0 5Q13-4 26 5L13 25Z" opacity=".35" />
    <path d="M3 9Q13 3 23 9L13 25Z" />
  </svg>
);

const SignalIcon = () => (
  <svg width="24" height="24" viewBox="0 0 24 24" fill="#fff">
    <path d="M24 0V24H0Z" opacity=".35" />
    <path d="M17 7V24H0Z" />
  </svg>
);

const BatteryIcon = () => (
  <svg width="26" height="27" viewBox="-5 0 26 27" fill="#fff">
    <path d="M4 0h8v2h2q2 0 2 2v9H0V4q0-2 2-2h2Z" opacity=".35" />
    <path d="M0 13H16V24q0 2-2 2H2q-2 0-2-2Z" />
  </svg>
);

const PinIcon = () => (
  <svg width="22" height="26" viewBox="0 0 22 26">
    <path fill="#ffc700" fillRule="evenodd" d="M11 0A10.600 10.600 0 0 0 .4 10.600Q.4 18 11 26 21.600 18 21.600 10.600A10.600 10.600 0 0 0 11 0ZM11 6.200A4.600 4.600 0 1 1 11 15.400 4.600 4.600 0 1 1 11 6.200Z" />
  </svg>
);

const SearchIcon = () => (
  <svg width="34" height="36" viewBox="0 0 34 36" fill="none" stroke="#a9a9a9" strokeWidth="4">
    <ellipse cx="15" cy="16" rx="12.500" ry="13" />
    <path d="M24 26 32 34" strokeLinecap="round" />
  </svg>
);

const CloseIcon = () => (
  <svg width="34" height="34" viewBox="0 0 34 34" fill="none" stroke="#b0b0b0" strokeWidth="5">
    <path d="M6 5 29 29M29 5 6 29" />
  </svg>
);

const STAR = "M14 0 18 9 28 10 20.500 17 23 27 14 22 5 27 7.500 17 0 10 10 9Z";

const Star = ({ half }) => (
  <svg width="28" height="28" viewBox="0 0 28 27" fill="#fa9c10">
    {half ? (
      <>
        <path d="M14 0V22L5 27 7.500 17 0 10 10 9Z" />
        <path d="M14 2 17.500 9.600 26.500 10.700 19.800 16.800 22 25.500 14 21.300" fill="none" stroke="#fa9c10" />
      </>
    ) : (
      <path d={STAR} />
    )}
  </svg>
);

const CallIcon = () => (
  <svg width="77" height="77" viewBox="0 0 77 72" preserveAspectRatio="none" fill="none" stroke="#fa8000" strokeWidth="2" strokeLinecap="round" strokeLinejoin="round">
    <path fill="#fcc000" d="M10 9Q14 5 18 9L25 18Q29 23 25 26 20 29 20 34 27 46 39 53 45 53 48 48 52 44 56 47L64 53Q69 57 66 61L60 67Q48 75 36 66L9 40Q1 32 1 24 1 17 10 9Z" />
    <path d="M16 25Q16 30 20 34M39 53Q44 57 51 57" />
    <path d="M35 19A22 22 0 0 1 57 40M35 10A31 31 0 0 1 66 40M35 2A40 40 0 0 1 75 40" />
  </svg>
);

const MENU_BARS = [0, 1, 2];
const STARS = [false, false, false, false, true];

export default function App() {
  return (
    <>
      <GlobalStyle />
      <Page>
        <Phone>
          <Antenna $edge="top" $side="left" />
          <Antenna $edge="top" $side="right" />
          <Antenna $edge="bottom" $side="left" />
          <Antenna $edge="bottom" $side="right" />
          <PowerKey />
          <Front>
            <Earpiece><Grille /></Earpiece>
            <Screen>
              <StatusBar>
                <WifiIcon />
                <SignalIcon />
                <BatteryIcon />
                <span>07:5</span>
              </StatusBar>
              <AppBar>
                <MenuButton aria-label="Menu">
                  {MENU_BARS.map((n) => <MenuBar key={n} />)}
                </MenuButton>
                <Title>Pickup Arriving</Title>
              </AppBar>
              <MapArea>
                <CityMap />
                <TripCard>
                  <Rail>
                    <Dot />
                    <Dashes />
                    <PinIcon />
                  </Rail>
                  <Stops>
                    <div>
                      <StopLabel>Pickup Location</StopLabel>
                      <StopValue>Historical Library &amp; Muse . . .</StopValue>
                    </div>
                    <div>
                      <StopLabel>Destination Location</StopLabel>
                      <StopValue>My Home</StopValue>
                    </div>
                  </Stops>
                  <CardActions>
                    <button aria-label="Search"><SearchIcon /></button>
                    <button aria-label="Clear destination"><CloseIcon /></button>
                  </CardActions>
                </TripCard>
              </MapArea>
              <Banner>Driver arriving in 1 min</Banner>
              <Driver>
                <Avatar />
                <DriverInfo>
                  <DriverName>John Doe</DriverName>
                  <Stars role="img" aria-label="4.5 out of 5">
                    {STARS.map((half, n) => <Star key={n} half={half} />)}
                  </Stars>
                  <CarInfo>Toyoto Pirus - GV8042- Mini- White</CarInfo>
                </DriverInfo>
                <DriverSide>
                  <Scheduled>Scheduled</Scheduled>
                  <CallLink href="#call" aria-label="Call driver"><CallIcon /></CallLink>
                </DriverSide>
              </Driver>
            </Screen>
            <Shade />
          </Front>
        </Phone>
      </Page>
    </>
  );
}
